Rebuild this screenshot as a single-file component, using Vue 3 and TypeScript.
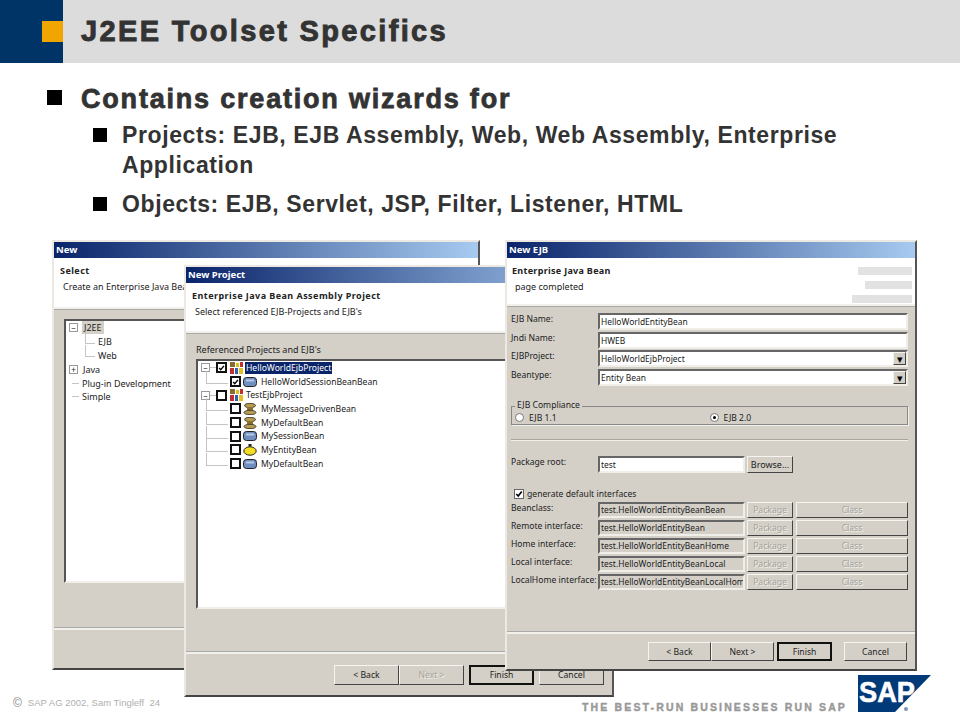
<script setup lang="ts">
interface BeanRow { icon: string; label: string; checked?: boolean; selected?: boolean; root?: boolean }
const beans: BeanRow[] = [
  { icon: 'project', label: 'HelloWorldEjbProject', checked: true, selected: true, root: true },
  { icon: 'session', label: 'HelloWorldSessionBeanBean', checked: true },
  { icon: 'project', label: 'TestEjbProject', root: true },
  { icon: 'message', label: 'MyMessageDrivenBean' },
  { icon: 'message', label: 'MyDefaultBean' },
  { icon: 'session', label: 'MySessionBean' },
  { icon: 'entity', label: 'MyEntityBean' },
  { icon: 'session', label: 'MyDefaultBean' },
]
const topFields = [
  { label: 'EJB Name:', value: 'HelloWorldEntityBean', combo: false },
  { label: 'Jndi Name:', value: 'HWEB', combo: false },
  { label: 'EJBProject:', value: 'HelloWorldEjbProject', combo: true },
  { label: 'Beantype:', value: 'Entity Bean', combo: true },
]
const classRows = [
  { label: 'Beanclass:', value: 'test.HelloWorldEntityBeanBean' },
  { label: 'Remote interface:', value: 'test.HelloWorldEntityBean' },
  { label: 'Home interface:', value: 'test.HelloWorldEntityBeanHome' },
  { label: 'Local interface:', value: 'test.HelloWorldEntityBeanLocal' },
  { label: 'LocalHome interface:', value: 'test.HelloWorldEntityBeanLocalHome' },
]
</script>

<template>
  <div class="slide">
    <header class="band">
      <div class="brand"><span class="accent"></span></div>
      <h1>J2EE Toolset Specifics</h1>
    </header>

    <section class="points">
      <div class="lvl1"><span class="b1"></span><span>Contains creation wizards for</span></div>
      <div class="lvl2"><span class="b2"></span><span>Projects: EJB, EJB Assembly, Web, Web Assembly, Enterprise Application</span></div>
      <div class="lvl2 gap"><span class="b2"></span><span>Objects: EJB, Servlet, JSP, Filter, Listener, HTML</span></div>
    </section>

    <!-- Window 1 -->
    <div class="win w1">
      <div class="title">New</div>
      <div class="head h1w">
        <div class="ht">Select</div>
        <div class="hs">Create an Enterprise Java Bean</div>
      </div>
      <div class="body b-w1">
        <div class="tree t1">
          <div class="node"><span class="exp">−</span><span class="hl">J2EE</span></div>
          <div class="node kid"><span class="elbow"></span>EJB</div>
          <div class="node kid"><span class="elbow"></span>Web</div>
          <div class="node"><span class="exp">+</span><span class="txt1">Java</span></div>
          <div class="node"><span class="stub"></span><span>Plug-in Development</span></div>
          <div class="node"><span class="stub"></span><span>Simple</span></div>
        </div>
      </div>
      <div class="foot f1"></div>
    </div>

    <!-- Window 2 -->
    <div class="win w2">
      <div class="title">New Project</div>
      <div class="head h2w">
        <div class="ht">Enterprise Java Bean Assembly Project</div>
        <div class="hs">Select referenced EJB-Projects and EJB's</div>
      </div>
      <div class="body b-w2">
        <div class="reflabel">Referenced Projects and EJB's</div>
        <div class="tree t2">
          <div v-for="(r, i) in beans" :key="i" class="brow" :class="{ child: !r.root }">
            <span v-if="r.root" class="exp">−</span>
            <span v-else class="elbow2"></span>
            <span v-if="r.root" class="dash"></span>
            <span class="check" :class="{ on: r.checked }">
              <svg v-if="r.checked" viewBox="0 0 9 9" width="9" height="9"><path d="M1.5 4.5 L3.6 6.8 L7.6 1.8" fill="none" stroke="#000" stroke-width="1.8"/></svg>
            </span>
            <svg class="ico" viewBox="0 0 14 12" width="14" height="12">
              <template v-if="r.icon === 'project'">
                <rect x="1" y="0" width="5" height="5" fill="#8b6a2c"/>
                <rect x="7" y="1" width="3" height="4" fill="#d8c020"/>
                <rect x="11" y="0" width="3" height="5" fill="#c03030"/>
                <rect x="1" y="6" width="4" height="6" fill="#c03030"/>
                <rect x="6" y="6" width="3" height="6" fill="#3060b0"/>
                <rect x="10" y="6" width="4" height="6" fill="#e0c020"/>
              </template>
              <template v-else-if="r.icon === 'session'">
                <rect x="0.5" y="1.5" width="13" height="9" rx="3" fill="#6f8fc0" stroke="#222"/>
                <rect x="3" y="3.5" width="8" height="2" fill="#b8c8e0"/>
              </template>
              <template v-else-if="r.icon === 'message'">
                <ellipse cx="7" cy="2.5" rx="5.5" ry="2.2" fill="#b89a50" stroke="#443"/>
                <rect x="4" y="4" width="6" height="4" fill="#8b7030"/>
                <ellipse cx="7" cy="9.5" rx="6" ry="2.2" fill="#b89a50" stroke="#443"/>
              </template>
              <template v-else>
                <ellipse cx="7" cy="7" rx="6.2" ry="4.2" fill="#f4dc20" stroke="#222"/>
                <rect x="5.5" y="0" width="3" height="2.5" fill="#222"/>
              </template>
            </svg>
            <span class="blabel" :class="{ sel: r.selected }">{{ r.label }}</span>
          </div>
        </div>
      </div>
      <div class="foot f2">
        <div class="btns">
          <button class="btn bw">&lt; Back</button>
          <button class="btn bw dis">Next &gt;</button>
          <button class="btn bw def gapl">Finish</button>
          <button class="btn bw gapl">Cancel</button>
        </div>
      </div>
    </div>

    <!-- Window 3 -->
    <div class="win w3">
      <div class="title">New EJB</div>
      <div class="head h3w">
        <div class="ht">Enterprise Java Bean</div>
        <div class="hs">page completed</div>
        <div class="blocks">
          <span class="blk k1"></span>
          <span class="blk k2"></span>
          <span class="blk k3"></span>
        </div>
      </div>
      <div class="body b-w3">
        <div class="topform">
          <div v-for="f in topFields" :key="f.label" class="frow">
            <span class="lab">{{ f.label }}</span>
            <span class="field"><span class="fv">{{ f.value }}</span><span v-if="f.combo" class="drop">▾</span></span>
          </div>
        </div>
        <fieldset class="group">
          <legend>EJB Compliance</legend>
          <div class="radios">
            <span class="radio"><i class="dot"></i>EJB 1.1</span>
            <span class="radio r2"><i class="dot on"></i>EJB 2.0</span>
          </div>
        </fieldset>
        <div class="rule"></div>
        <div class="frow pkg">
          <span class="lab">Package root:</span>
          <span class="field short"><span class="fv">test</span></span>
          <button class="btn browse">Browse...</button>
        </div>
        <div class="gen"><span class="cb3"><svg viewBox="0 0 9 9" width="9" height="9"><path d="M1.5 4.5 L3.6 6.8 L7.6 1.8" fill="none" stroke="#000" stroke-width="1.8"/></svg></span>generate default interfaces</div>
        <div class="classes">
          <div v-for="c in classRows" :key="c.label" class="frow crow">
            <span class="lab">{{ c.label }}</span>
            <span class="field short ro"><span class="fv">{{ c.value }}</span></span>
            <button class="btn pk dis">Package</button>
            <button class="btn cl dis">Class</button>
          </div>
        </div>
      </div>
      <div class="foot f3">
        <div class="btns">
          <button class="btn b3a">&lt; Back</button>
          <button class="btn b3a">Next &gt;</button>
          <button class="btn b3f def">Finish</button>
          <button class="btn b3c">Cancel</button>
        </div>
      </div>
    </div>

    <footer class="legal"><span class="copy">©</span><span>SAP AG 2002, Sam Tingleff&nbsp; 24</span></footer>
    <div class="tag">THE BEST-RUN BUSINESSES RUN SAP</div>
    <svg class="logo" viewBox="0 0 73 37" width="73" height="37">
      <polygon points="0,0 73,0 37,37 0,37" fill="#003a78"/>
      <text x="1" y="27" font-family="Liberation Sans, sans-serif" font-weight="700" font-size="30" fill="#fff" textLength="56" lengthAdjust="spacingAndGlyphs" stroke="#fff" stroke-width="0.6">SAP</text>
      <circle cx="48" cy="34" r="2" fill="#7f94b4"/>
    </svg>
  </div>
</template>

<style scoped>
.slide { position: relative; width: 960px; height: 720px; overflow: hidden; background: #fff; font-family: "Liberation Sans", Arial, sans-serif; color: #333; }
.band { height: 63px; background: #dcdcdc; display: flex; align-items: center; }
.brand { width: 63px; height: 63px; background: #003366; display: flex; justify-content: flex-end; align-items: center; }
.accent { width: 21px; height: 21px; background: #f0a500; }
h1 { margin: 0 0 0 18px; font-size: 29px; font-weight: 700; letter-spacing: 2.35px; -webkit-text-stroke: 0.9px #333; line-height: 63px; }
.points { padding: 20px 100px 0 47px; }
.lvl1 { display: flex; font-size: 27px; font-weight: 700; line-height: 32px; letter-spacing: 1.8px; -webkit-text-stroke: 0.8px #333; }
.b1 { width: 15px; height: 15px; background: #000; margin: 7px 19px 0 0; flex: none; }
.lvl2 { display: flex; font-size: 23px; font-weight: 700; line-height: 30px; letter-spacing: 0.6px; margin: 5px 0 0 46px; }
.lvl2.gap { margin-top: 9px; }
.b2 { width: 14px; height: 14px; background: #000; margin: 8px 15px 0 0; flex: none; }

.win { position: absolute; box-sizing: border-box; display: flex; flex-direction: column; background: #d4d0c8; border: 2px solid #ece9e2; border-right-color: #555; border-bottom-color: #444; font-family: "Noto Sans", Tahoma, sans-serif; font-size: 9px; color: #222; }
.w1 { left: 52px; top: 240px; width: 428px; height: 430px; z-index: 1; }
.w2 { left: 184px; top: 265px; width: 430px; height: 432px; z-index: 2; }
.w3 { left: 505px; top: 240px; width: 412px; height: 431px; z-index: 3; }
.title { height: 16px; flex: none; background: linear-gradient(90deg, #0a246a, #a6caf0); color: #fff; font-weight: 700; font-size: 9.5px; line-height: 15px; padding-left: 2px; }
.head { position: relative; flex: none; background: #fff; border-bottom: 2px solid #f2f0ea; box-shadow: 0 1px 0 #aaa; box-sizing: border-box; }
.h1w { height: 51px; padding: 6px 0 0 6px; }
.h2w { height: 50px; padding: 6px 0 0 6px; }
.h3w { height: 48px; padding: 6px 0 0 5px; }
.ht { font-weight: 700; line-height: 13px; letter-spacing: 0.45px; }
.h3w .ht { letter-spacing: 0.3px; }
.hs { line-height: 13px; margin: 3px 0 0 3px; }
.blocks { position: absolute; right: 3px; top: 9px; display: flex; flex-direction: column; align-items: flex-end; gap: 6px; }
.blk { display: block; height: 8px; background: #e2e2e2; }
.k1 { width: 54px; } .k2 { width: 47px; } .k3 { width: 60px; }
.body { flex: 1; min-height: 0; }
.foot { flex: none; border-top: 2px solid #f2f0ea; box-shadow: 0 -1px 0 #aaa; box-sizing: border-box; }
.b-w1 { padding: 10px 0 0 10px; }
.f1 { height: 40px; }
.tree { background: #fff; border: 2px solid #555; border-right: 0; border-bottom-color: #f0eee8; box-sizing: border-box; }
.t1 { width: 420px; height: 264px; padding: 0 0 0 3px; }
.node { display: flex; align-items: center; height: 13.8px; gap: 3px; white-space: nowrap; }
.exp { width: 7px; height: 7px; flex: none; border: 1px solid #999; box-sizing: content-box; display: flex; align-items: center; justify-content: center; font-size: 8px; line-height: 7px; background: #fff; }
.hl { background: #d4d0c8; padding: 0 2px; margin-left: 1px; }
.txt1 { margin-left: 2px; }
.stub { width: 7px; border-bottom: 1px solid #c4c4c4; flex: none; margin-left: 3px; }
.kid { padding-left: 16px; }
.elbow { width: 10px; height: 12px; margin-top: -8px; flex: none; border-left: 1px solid #c4c4c4; border-bottom: 1px solid #c4c4c4; box-sizing: border-box; }

.b-w2 { padding: 0 0 0 10px; }
.reflabel { line-height: 13px; margin-top: 10px; }
.t2 { width: 420px; height: 250px; margin-top: 3px; padding: 0 0 0 3px; font-size: 8.6px; }
.brow { display: flex; align-items: center; height: 13.7px; white-space: nowrap; }
.brow.child { padding-left: 5px; }
.brow.child .blabel { margin-left: 3px; }
.dash { width: 6px; border-bottom: 1px solid #c4c4c4; flex: none; }
.elbow2 { width: 22px; height: 13px; margin-top: -8px; flex: none; border-left: 1px solid #c4c4c4; border-bottom: 1px solid #c4c4c4; box-sizing: border-box; margin-left: 0; margin-right: 2px; }
.check { width: 11px; height: 11px; flex: none; box-sizing: border-box; border: 2px solid #111; background: #fff; display: flex; align-items: center; justify-content: center; }
.check svg { width: 8px; height: 8px; }
.ico { margin-left: 2px; flex: none; }
.blabel { margin-left: 2px; padding: 0 1px; line-height: 12px; }
.sel { background: #0a246a; color: #fff; }
.f2 { height: 43px; padding: 11px 0 0 148px; }
.btns { display: flex; }
.btn { box-sizing: border-box; padding: 0; margin: 0; background: #d4d0c8; color: #222; font: 8.6px "Noto Sans", Tahoma, sans-serif; border: 1px solid; border-color: #f6f4ee #444 #444 #f6f4ee; }
.bw { width: 65px; height: 20px; }
.gapl { margin-left: 5px; }
.def { outline: 1px solid #111; outline-offset: -1px; border-width: 2px; border-color: #111; }
.dis { color: #a5a29a; text-shadow: 1px 1px 0 #f2f0ea; }

.b-w3 { padding: 7px 7px 0 4px; font-size: 8.6px; }
.frow { display: flex; align-items: flex-start; }
.lab { width: 82px; flex: none; line-height: 12px; white-space: nowrap; }
.field { flex: 1; min-width: 0; position: relative; height: 17px; box-sizing: border-box; background: #fff; border: 2px solid #666; border-right-color: #f0eee8; border-bottom-color: #f0eee8; display: flex; align-items: center; padding-left: 1px; overflow: hidden; white-space: nowrap; margin-left: 5px; font-size: 8.45px; }
.fv { flex: 1; overflow: hidden; line-height: 13px; }
.drop { position: absolute; right: 0; top: 0; bottom: 0; width: 13px; background: #d4d0c8; border: 1px solid; border-color: #f6f4ee #444 #444 #f6f4ee; box-sizing: border-box; display: flex; align-items: center; justify-content: center; font-size: 11px; line-height: 11px; color: #000; }
.topform { display: flex; flex-direction: column; gap: 1.5px; }
.group { margin: 20px 0 0 0; padding: 0 3px 0 3px; height: 19px; border: 1px solid #888; box-shadow: 1px 1px 0 #f2f0ea; box-sizing: border-box; min-width: 0; position: relative; }
.group legend { position: absolute; top: -7px; left: 3px; padding: 0 2px; background: #d4d0c8; line-height: 11px; }
.radios { display: flex; margin-top: 5px; }
.radio { display: flex; align-items: center; gap: 5px; line-height: 12px; }
.r2 { margin-left: 153px; }
.dot { display: block; width: 9px; height: 9px; border-radius: 50%; box-sizing: border-box; background: #fff; border: 1px solid #777; position: relative; }
.dot.on::after { content: ""; position: absolute; left: 2px; top: 2px; width: 3px; height: 3px; border-radius: 50%; background: #000; }
.rule { height: 1px; background: #a8a59d; border-bottom: 1px solid #f2f0ea; margin-top: 14px; }
.pkg { margin-top: 15px; }
.short { flex: none; width: 147px; }
.browse { width: 46px; height: 17px; margin-left: 2px; font-size: 9px; }
.gen { display: flex; align-items: center; gap: 3px; line-height: 12px; margin-top: 15px; padding-left: 3px; }
.cb3 { width: 10px; height: 10px; background: #fff; border: 1px solid #666; box-sizing: border-box; display: flex; align-items: center; justify-content: center; }
.cb3 svg { width: 8px; height: 8px; }
.classes { display: flex; flex-direction: column; gap: 2px; margin-top: 2px; }
.crow { height: 16px; }
.ro { background: #d4d0c8; height: 16px; }
.pk { width: 46px; height: 16px; margin-left: 2px; }
.cl { width: 112px; height: 16px; margin-left: 3px; }
.f3 { height: 37px; padding: 8px 0 0 141px; }
.b3a { width: 63px; height: 19px; }
.b3f { width: 55px; height: 19px; margin-left: 3px; }
.b3c { width: 63px; height: 19px; margin-left: 12px; }

.legal { position: absolute; left: 13px; top: 697px; display: flex; gap: 6px; font-size: 9.5px; line-height: 12px; color: #b0b0b0; }
.copy { color: #888; font-size: 12px; }
.tag { position: absolute; left: 582px; top: 701px; font-size: 10.5px; line-height: 12px; font-weight: 700; letter-spacing: 2.15px; color: #999; -webkit-text-stroke: 0.4px #999; white-space: nowrap; }
.logo { position: absolute; left: 858px; top: 675px; }
</style>
